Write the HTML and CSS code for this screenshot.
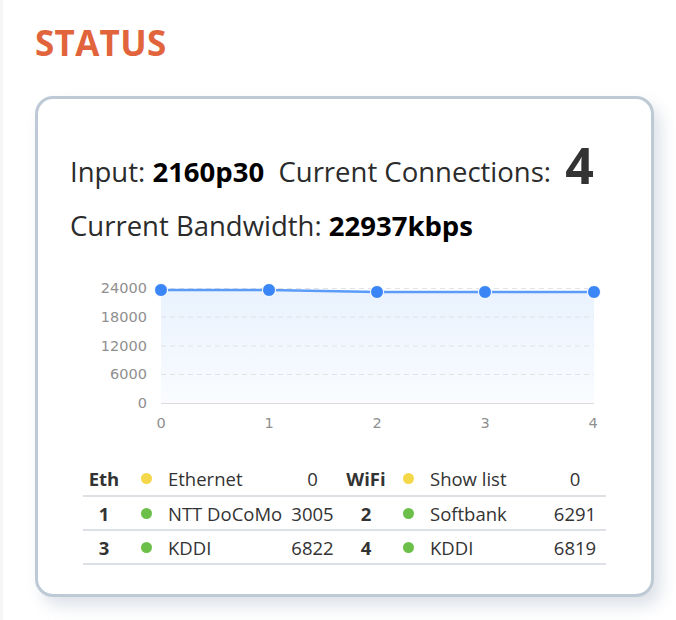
FILE: index.html
```html
<!DOCTYPE html>
<html lang="en">
<head>
  <meta charset="UTF-8" />
  <title>Status</title>
  <link rel="stylesheet" href="styles.css">
</head>
<body>
  <div class="page">
    <h1 class="title">STATUS</h1>

    <div class="card">
      <p class="stat">
        Input: <b>2160p30</b>&nbsp; Current Connections:&nbsp; <b class="big">4</b>
      </p>
      <p class="stat">Current Bandwidth: <b>22937kbps</b></p>

      <svg class="chart" width="560" height="180" viewBox="0 0 560 180">
        <defs>
          <linearGradient id="fill" x1="0" y1="0" x2="0" y2="1">
            <stop offset="0" stop-color="#e9f2fe" />
            <stop offset="1" stop-color="#fafcff" />
          </linearGradient>
        </defs>
        <g class="axis-y" text-anchor="end">
          <text x="97" y="35">24000</text>
          <text x="97" y="64">18000</text>
          <text x="97" y="93">12000</text>
          <text x="97" y="121">6000</text>
          <text x="97" y="150">0</text>
        </g>
        <path d="M111 32 L219 32 L327 34 L435 34 L544 34 L544 145 L111 145 Z" fill="url(#fill)" />
        <g class="grid">
          <line x1="111" y1="30.5" x2="544" y2="30.5" />
          <line x1="111" y1="59" x2="544" y2="59" />
          <line x1="111" y1="88" x2="544" y2="88" />
          <line x1="111" y1="116.5" x2="544" y2="116.5" />
        </g>
        <line class="base" x1="111" y1="145.5" x2="544" y2="145.5" />
        <polyline class="line" points="111,32 219,32 327,34 435,34 544,34" />
        <g class="dots">
          <circle cx="111" cy="32" r="6.5" />
          <circle cx="219" cy="32" r="6.5" />
          <circle cx="327" cy="34" r="6.5" />
          <circle cx="435" cy="34" r="6.5" />
          <circle cx="544" cy="34" r="6.5" />
        </g>
        <g class="axis-x" text-anchor="middle">
          <text x="111" y="170">0</text>
          <text x="219" y="170">1</text>
          <text x="327" y="170">2</text>
          <text x="435" y="170">3</text>
          <text x="543" y="170">4</text>
        </g>
      </svg>

      <table class="links">
        <colgroup>
          <col style="width:42px"><col style="width:43px"><col style="width:123px"><col style="width:43px">
          <col style="width:64px"><col style="width:21px"><col style="width:125px"><col style="width:62px">
        </colgroup>
        <tr>
          <th>Eth</th><td><span class="dot idle"></span></td><td class="name">Ethernet</td><td class="num">0</td>
          <th>WiFi</th><td><span class="dot idle"></span></td><td class="name wide">Show list</td><td class="num">0</td>
        </tr>
        <tr>
          <th>1</th><td><span class="dot on"></span></td><td class="name">NTT DoCoMo</td><td class="num">3005</td>
          <th>2</th><td><span class="dot on"></span></td><td class="name wide">Softbank</td><td class="num">6291</td>
        </tr>
        <tr>
          <th>3</th><td><span class="dot on"></span></td><td class="name">KDDI</td><td class="num">6822</td>
          <th>4</th><td><span class="dot on"></span></td><td class="name wide">KDDI</td><td class="num">6819</td>
        </tr>
      </table>
    </div>
  </div>
</body>
</html>
```

FILE: styles.css
```css
* {
  box-sizing: border-box;
}

body {
  margin: 0;
  background: #fff;
  font-family: 'Open Sans', sans-serif;
  color: #222;
  border-left: 3px solid #f6f6f6;
  min-height: 100vh;
}

.page {
  padding: 18px 0 0 32px;
}

.title {
  margin: 0 0 28px;
  font-size: 35px;
  line-height: 50px;
  font-weight: 700;
  color: #e2643c;
  letter-spacing: 0.3px;
}

.card {
  width: 619px;
  height: 501px;
  border: 3px solid #bdcad6;
  border-radius: 18px;
  background: #fff;
  box-shadow: 7px 9px 16px rgba(150, 165, 185, 0.32);
  padding: 46px 0 0 32px;
}

.stat {
  margin: 0;
  font-size: 27.5px;
  line-height: 54px;
  color: #2b2b2b;
}

.stat b {
  color: #000;
}

.stat .big {
  font-size: 50px;
  line-height: 0;
  color: #333;
  vertical-align: -2px;
}

.chart {
  display: block;
  margin: 5px 0 0 -20px;
}

.chart text {
  font-family: 'DejaVu Sans', sans-serif;
  font-size: 14.5px;
  fill: #8f8f8f;
}

.grid line {
  stroke: #e2e2e2;
  stroke-dasharray: 5 4;
}

.base {
  stroke: #dcdcdc;
}

.line {
  fill: none;
  stroke: #5a9cf8;
  stroke-width: 2.5;
}

.dots circle {
  fill: #3a86f6;
  stroke: #fff;
  stroke-width: 1;
}

.links {
  margin: 24px 0 0 13px;
  width: 523px;
  table-layout: fixed;
  border-collapse: collapse;
  font-size: 18.5px;
  color: #333;
}

.links tr {
  height: 34px;
  border-bottom: 2px solid #dde1e6;
}

.links th {
  font-weight: 700;
  text-align: center;
  padding: 0;
}

.links td {
  padding: 0;
  white-space: nowrap;
}

.links td.name.wide {
  padding-left: 11px;
}

.links td.num {
  text-align: center;
}

.dot {
  display: block;
  width: 11px;
  height: 11px;
  border-radius: 50%;
  margin: 0 auto;
}

.dot.idle {
  background: #f4d84a;
}

.dot.on {
  background: #6cc04a;
}
```
